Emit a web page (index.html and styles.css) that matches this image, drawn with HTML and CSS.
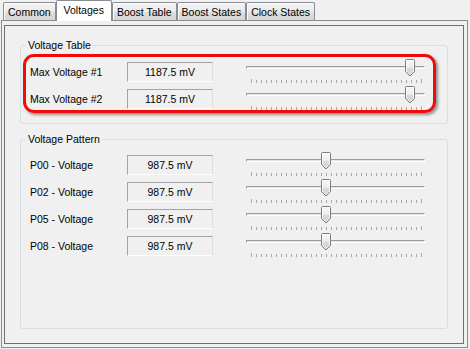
FILE: index.html
```html
<!DOCTYPE html>
<html>
<head>
<meta charset="utf-8">
<link rel="stylesheet" href="styles.css">
</head>
<body>
<svg class="defs" aria-hidden="true">
  <defs>
    <linearGradient id="tg" x1="0" y1="0" x2="0" y2="1">
      <stop offset="0" stop-color="#f7f7f7"/>
      <stop offset="0.45" stop-color="#ededed"/>
      <stop offset="0.55" stop-color="#dadada"/>
      <stop offset="1" stop-color="#cdcdcd"/>
    </linearGradient>
    <g id="thumbshape">
      <path d="M1.5 .5h7a1 1 0 0 1 1 1V12.5L5 17L.5 12.5V1.5a1 1 0 0 1 1-1z" fill="url(#tg)" stroke="#7c7c7c"/>
      <path d="M1.5 1.5h7V12.1L5 15.6 1.5 12.1z" fill="none" stroke="#ffffff" stroke-opacity="0.7"/>
    </g>
  </defs>
</svg>

<div class="tabs">
  <div class="tab">Common</div>
  <div class="tab active">Voltages</div>
  <div class="tab">Boost Table</div>
  <div class="tab">Boost States</div>
  <div class="tab">Clock States</div>
</div>

<div class="panel">
  <div class="page">
    <fieldset class="group g1">
      <legend>Voltage Table</legend>
      <div class="rows">
        <div class="highlight"></div>
        <div class="row">
          <span class="label">Max Voltage #1</span>
          <span class="value">1187.5 mV</span>
          <div class="slider"><div class="track"></div><div class="ticks"></div><svg class="thumb" style="left:159px" width="10" height="18" viewBox="0 0 10 18"><use href="#thumbshape"/></svg></div>
        </div>
        <div class="row">
          <span class="label">Max Voltage #2</span>
          <span class="value">1187.5 mV</span>
          <div class="slider"><div class="track"></div><div class="ticks"></div><svg class="thumb" style="left:159px" width="10" height="18" viewBox="0 0 10 18"><use href="#thumbshape"/></svg></div>
        </div>
      </div>
    </fieldset>

    <fieldset class="group g2">
      <legend>Voltage Pattern</legend>
      <div class="rows">
        <div class="row">
          <span class="label">P00 - Voltage</span>
          <span class="value">987.5 mV</span>
          <div class="slider"><div class="track"></div><div class="ticks"></div><svg class="thumb" style="left:75px" width="10" height="18" viewBox="0 0 10 18"><use href="#thumbshape"/></svg></div>
        </div>
        <div class="row">
          <span class="label">P02 - Voltage</span>
          <span class="value">987.5 mV</span>
          <div class="slider"><div class="track"></div><div class="ticks"></div><svg class="thumb" style="left:75px" width="10" height="18" viewBox="0 0 10 18"><use href="#thumbshape"/></svg></div>
        </div>
        <div class="row">
          <span class="label">P05 - Voltage</span>
          <span class="value">987.5 mV</span>
          <div class="slider"><div class="track"></div><div class="ticks"></div><svg class="thumb" style="left:75px" width="10" height="18" viewBox="0 0 10 18"><use href="#thumbshape"/></svg></div>
        </div>
        <div class="row">
          <span class="label">P08 - Voltage</span>
          <span class="value">987.5 mV</span>
          <div class="slider"><div class="track"></div><div class="ticks"></div><svg class="thumb" style="left:75px" width="10" height="18" viewBox="0 0 10 18"><use href="#thumbshape"/></svg></div>
        </div>
      </div>
    </fieldset>
  </div>
</div>
</body>
</html>
```

FILE: styles.css
```css
html, body {
  margin: 0;
  padding: 0;
}
body {
  width: 470px;
  height: 349px;
  overflow: hidden;
  background: #f0f0f0;
  color: #000;
  font-family: "Liberation Sans", Arial, sans-serif;
  font-size: 10.5px;
}

.defs {
  position: absolute;
  width: 0;
  height: 0;
  overflow: hidden;
}

/* Tabs */
.tabs {
  display: flex;
  align-items: flex-end;
  height: 20px;
  padding-left: 3px;
  position: relative;
  z-index: 2;
}
.tab {
  box-sizing: border-box;
  height: 18px;
  padding: 0 4px;
  border: 1px solid #898c95;
  border-bottom: 0;
  border-radius: 2px 2px 0 0;
  background: linear-gradient(#f3f3f3, #ebebeb 50%, #dfdfdf 51%, #d4d4d4);
  box-shadow: inset 1px 1px 0 rgba(255, 255, 255, 0.85);
  line-height: 18px;
  white-space: nowrap;
}
.tab.active {
  height: 21px;
  margin-bottom: -1px;
  padding: 0 7px;
  background: #fff;
  box-shadow: none;
  line-height: 18px;
}

/* Panel */
.panel {
  box-sizing: border-box;
  margin-left: 1px;
  width: 467px;
  height: 328px;
  border: 1px solid #898c95;
  padding: 4px 3px 3px 2px;
  display: flex;
  flex-direction: column;
  background: #f0f0f0;
}
.page {
  flex: 1;
  border: 1px solid #707070;
  display: flex;
  flex-direction: column;
}

/* Group boxes */
.group {
  margin: 13px 15px 0;
  padding: 10px 0 14px 9px;
  border: 1px solid #d5dfe5;
  border-radius: 3px;
  min-width: 0;
}
.group legend {
  padding: 0 2px;
  margin-left: -4px;
  line-height: 13px;
}
.g2 {
  margin-top: 9px;
  padding-top: 9px;
  padding-bottom: 72px;
}

.rows {
  position: relative;
  display: flex;
  flex-direction: column;
  gap: 7px;
}
.row {
  display: flex;
  align-items: center;
  height: 20px;
}
.label {
  width: 97px;
  white-space: nowrap;
}
.value {
  box-sizing: border-box;
  width: 86px;
  height: 20px;
  border: 1px solid;
  border-color: #a3a3a3 #dedede #ffffff #a3a3a3;
  line-height: 18px;
  text-align: center;
}

/* Trackbar */
.slider {
  position: relative;
  width: 179px;
  height: 20px;
  margin-left: 33px;
  align-self: flex-start;
}
.track {
  box-sizing: border-box;
  margin-top: 4px;
  height: 3px;
  border: 1px solid;
  border-color: #9d9d9d #ffffff #ffffff #9d9d9d;
  background: #e4e4e4;
}
.ticks {
  position: relative;
  margin: 11px 0 0 5px;
  width: 171px;
  height: 3px;
  background: repeating-linear-gradient(to right, #a8a8a8 0 1px, transparent 1px 5px);
}
.ticks::before,
.ticks::after {
  content: "";
  position: absolute;
  top: -1px;
  width: 1px;
  height: 4px;
  background: #a8a8a8;
}
.ticks::before { left: 0; }
.ticks::after { right: 0; }
.thumb {
  position: absolute;
  top: -3px;
  display: block;
}

/* Red annotation */
.highlight {
  position: absolute;
  left: -7px;
  top: -8px;
  width: 413px;
  height: 59px;
  box-sizing: border-box;
  border: 3px solid #f20a0a;
  border-radius: 11px;
  box-shadow: 2px 2px 3px rgba(0, 0, 0, 0.4);
  pointer-events: none;
}
```
